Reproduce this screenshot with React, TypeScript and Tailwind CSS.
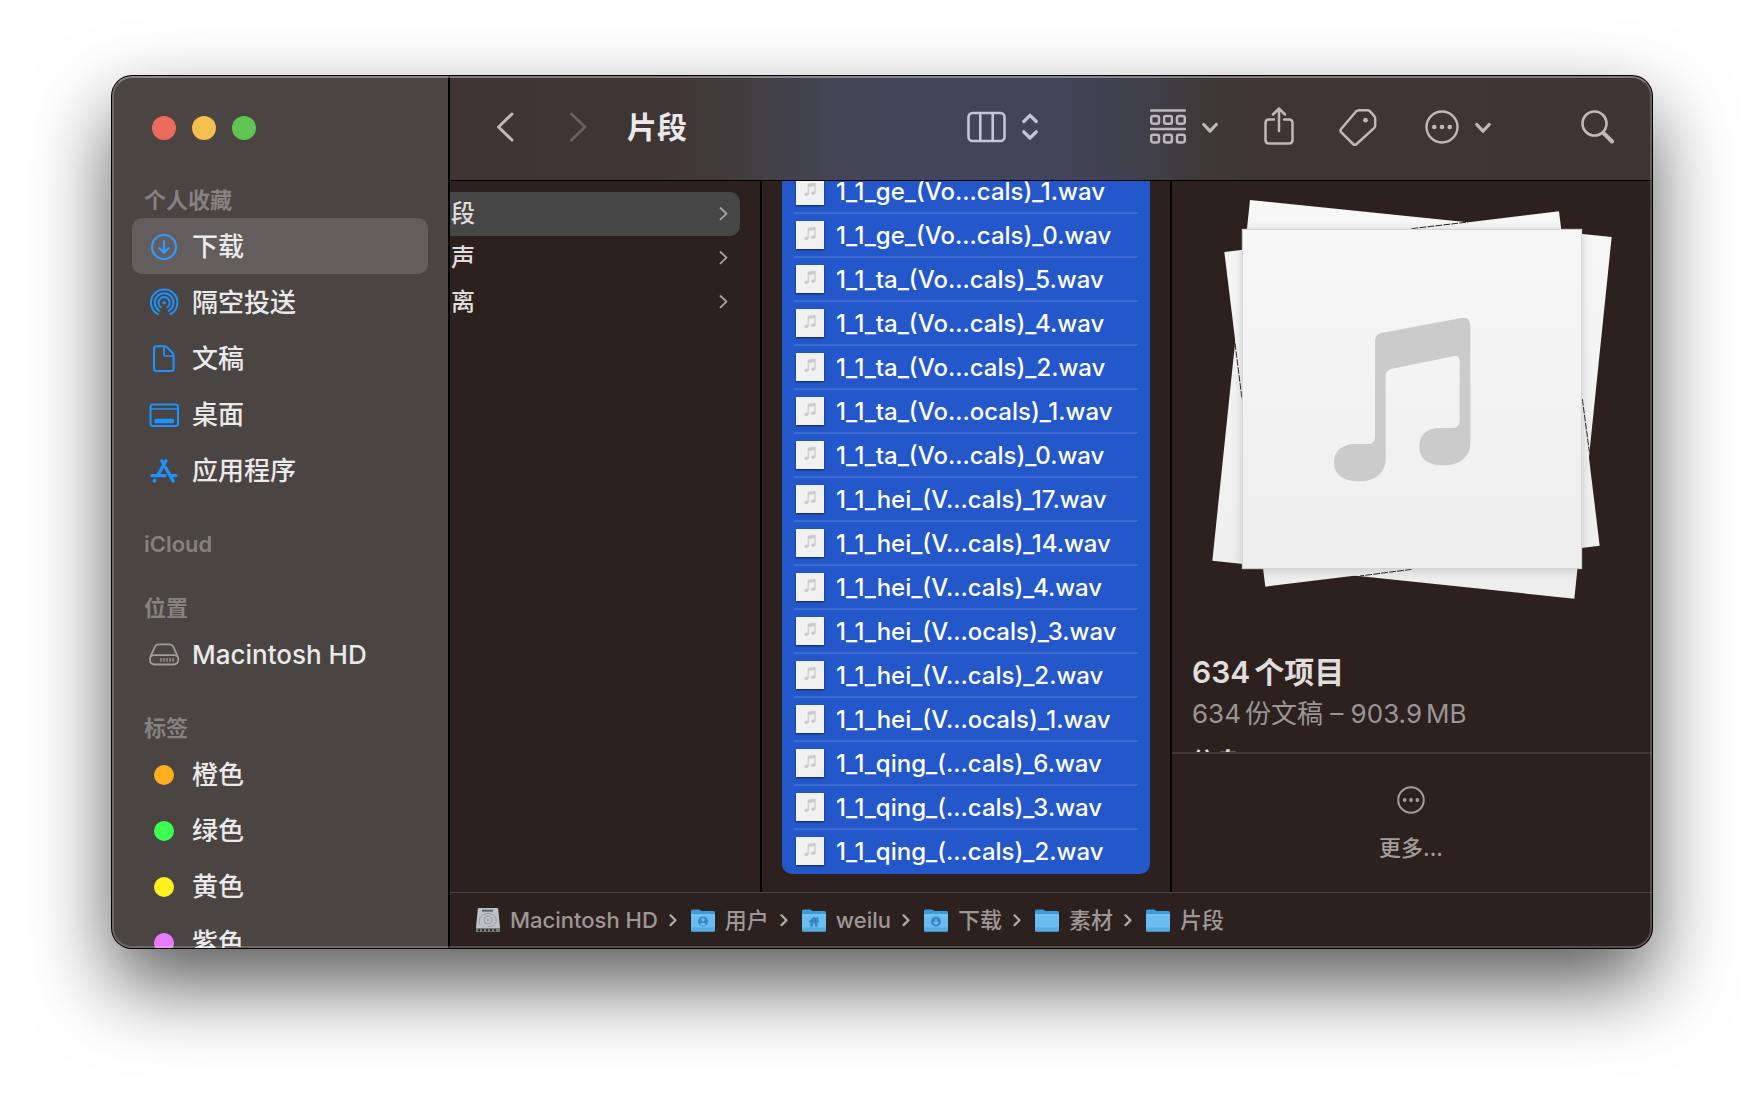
import React from 'react';

type IconProps = { className?: string };

const DownloadIcon: React.FC = () => (
  <svg viewBox="0 0 32 32" className="w-8 h-8" fill="none" stroke="#2f9dff" strokeWidth="2.2" strokeLinecap="round" strokeLinejoin="round">
    <circle cx="16" cy="17" r="12" />
    <path d="M16 11v11.4M11.5 18.2l4.5 4.4 4.5-4.4" />
  </svg>
);

const AirDropIcon: React.FC = () => (
  <svg viewBox="0 0 32 32" className="w-8 h-8" fill="none" stroke="#1e93ff" strokeWidth="2" strokeLinecap="round">
    <path d="M9.9 28.2A13.2 13.2 0 1 1 22.5 28.2" />
    <path d="M11.3 24.7A9.4 9.4 0 1 1 20.9 24.7" />
    <path d="M12.8 21.2A5.6 5.6 0 1 1 19.4 21.2" />
    <circle cx="16.1" cy="16.8" r="1.8" fill="#1e93ff" stroke="none" />
  </svg>
);

const DocumentIcon: React.FC = () => (
  <svg viewBox="0 0 32 32" className="w-8 h-8" fill="none" stroke="#1e93ff" strokeWidth="2.1" strokeLinejoin="round">
    <path d="M8.500 4.200h8.200c1 0 1.600.3 2.300 1l5.600 5.700c.7.7 1 1.300 1 2.300v13.300c0 1.700-.8 2.500-2.500 2.500H8.500c-1.700 0-2.500-.8-2.500-2.500V6.700C6 5 6.800 4.200 8.500 4.200Z" />
    <path d="M16 4.500v8c0 1 .5 1.500 1.500 1.500h8" strokeWidth="1.700" />
  </svg>
);

const DesktopIcon: React.FC = () => (
  <svg viewBox="0 0 32 32" className="w-8 h-8" fill="none" stroke="#1e93ff" strokeWidth="2.1">
    <rect x="2.500" y="6.500" width="27.500" height="21.500" rx="2.500" />
    <path d="M2.500 11h27.500" strokeWidth="1.500" />
    <rect x="6.500" y="20.800" width="19.500" height="4.400" rx="1" fill="#1e93ff" stroke="none" />
  </svg>
);

const AppsIcon: React.FC = () => (
  <svg viewBox="0 0 32 32" className="w-8 h-8" fill="none" stroke="#1e93ff" strokeWidth="3.200" strokeLinecap="round">
    <path d="M18 6.800 9.800 21.200M13.800 6.800l1.500 2.600M17.600 13.600 25.100 27M4 21.700h13.200M23.500 21.700h4.400M6.800 26.200l-.5.9" />
  </svg>
);

const DiskIcon: React.FC = () => (
  <svg viewBox="0 0 32 32" className="w-8 h-8" fill="none" stroke="#a09c9c" strokeWidth="1.800" strokeLinejoin="round">
    <path d="M10.500 6.300h11.200c1.700 0 2.700.7 3.500 2.300l4.300 9.400c.6 1.300.8 2.300.8 3.300 0 3.300-1.600 5.200-5 5.200H6.900c-3.400 0-5-1.900-5-5.200 0-1 .2-2 .8-3.300L7 8.600c.8-1.600 1.800-2.300 3.500-2.300Z" />
    <path d="M2.500 18.800c1-1.500 2.200-1.700 4-1.700h19.200c1.800 0 3 .2 4 1.700" />
    <path d="M13 20v3.700M16 20v3.700M19 20v3.700M22 20v3.700M25 20v3.700" strokeWidth="1.300" />
  </svg>
);

const SmallDown: React.FC = () => (
  <svg viewBox="0 0 16 36" className="w-4 h-9" fill="none" stroke="currentColor" strokeWidth="3.200" strokeLinecap="round" strokeLinejoin="round">
    <path d="m1.800 15.500 6.200 6.700 6.200-6.700" />
  </svg>
);

const EllipsisCircle: React.FC<IconProps> = ({ className }) => (
  <svg viewBox="0 0 34 34" className={className} fill="none" stroke="currentColor" strokeWidth="2.400">
    <circle cx="17" cy="17" r="15.500" />
    <g fill="currentColor" stroke="none">
      <circle cx="9.300" cy="17" r="2.300" />
      <circle cx="17" cy="17" r="2.300" />
      <circle cx="24.700" cy="17" r="2.300" />
    </g>
  </svg>
);

const NOTE =
  'M645 484Q645 463 664 459L903 414Q931 409 931 438V788C931 830 900 856 852 856C805 856 778 837 778 800C778 763 802 744 838 744H876Q899 744 899 722V546Q899 525 880 529L696 566Q677 570 677 588V836C677 878 645 904 598 904C552 904 522 885 522 848C522 811 548 792 584 792H621Q645 792 645 770Z';

const FileIcon: React.FC = () => (
  <svg viewBox="0 0 28 28" className="w-7 h-7 shrink-0 bg-[#f1f1f1] shadow-[0_1px_2px_rgba(0,0,0,0.6)]">
    <g transform="translate(-5.500 -5.300) scale(0.0268)" fill="#cbcbcb" stroke="#cbcbcb" strokeWidth="14">
      <path d={NOTE} />
    </g>
  </svg>
);

const PaperStack: React.FC = () => (
  <svg viewBox="156 57 1200 1200" className="w-[400px] h-[400px]">
    <defs>
      <linearGradient id="paper" x1="0" y1="0" x2="0" y2="1">
        <stop offset="0" stopColor="#f7f7f7" />
        <stop offset="1" stopColor="#eeeeee" />
      </linearGradient>
      <filter id="soft" x="-10%" y="-10%" width="120%" height="120%">
        <feGaussianBlur stdDeviation="16" />
      </filter>
      <clipPath id="sheets">
        <path d="M270 60 1355 171 1243 1256 157 1142ZM193 216 1197 94 1319 1097 316 1220Z" />
      </clipPath>
    </defs>
    <path d="M270 60 1355 171 1243 1256 157 1142Z" fill="url(#paper)" />
    <path d="M193 216 1197 94 1319 1097 316 1220Z" fill="url(#paper)" />
    <path d="M755 146 925 126M225 490 246 657M1267 657 1288 815M755 1168 600 1188" stroke="#2c211f" strokeWidth="3" strokeDasharray="20 4" />
    <g clipPath="url(#sheets)">
      <rect x="246" y="152" width="1020" height="1020" fill="#000" opacity="0.160" filter="url(#soft)" />
    </g>
    <rect x="247" y="148" width="1018" height="1018" fill="url(#paper)" stroke="#d2d2d2" strokeWidth="3" />
    <path d={NOTE} fill="#cbcbcb" />
  </svg>
);

const DriveIcon: React.FC = () => (
  <svg viewBox="0 0 24 26" className="w-6 h-[26px] shrink-0">
    <path d="M3 1h18q1 0 1.200 1L24 20.500v3q0 1.500-1.500 1.500h-21Q0 25 0 23.500v-3L1.800 2Q2 1 3 1Z" fill="#bcc3c7" />
    <path d="M0 21h24v2.500q0 1.500-1.500 1.500h-21Q0 25 0 23.500Z" fill="#747b7e" />
    <path d="M2 23.300h20" stroke="#23282a" strokeWidth="2" strokeDasharray="2 2" />
    <path d="M6 2.700h11v2H6Z" fill="#5d6468" />
    <g fill="none" stroke="#929b9f">
      <path d="M4 18C1.500 11 6 6.500 12 6.500s9 4 8 8.500c-.8 3.500-4 4.500-8 4.500" />
      <circle cx="12" cy="13" r="4" />
    </g>
    <circle cx="12" cy="13" r="1" fill="#929b9f" />
  </svg>
);

const FolderIcon: React.FC<{ badge?: string }> = ({ badge }) => (
  <svg viewBox="0 0 24 26" className="w-6 h-[26px] shrink-0">
    <path d="M0 4q0-1.500 1.500-1.500h6q1 0 1.700.7t1.800.7h11.500Q24 3.900 24 5.500V10H0Z" fill="#3f9bd6" />
    <path d="M0 7.500h24V23q0 1.500-1.500 1.500h-21Q0 24.500 0 23Z" fill="#6bbdf0" />
    <path d="M0 7.500h24v1H0Z" fill="#86d0fa" />
    <path d="M0 20.500h24V23q0 1.500-1.500 1.500h-21Q0 24.500 0 23Z" fill="#56abe1" />
    {badge === 'user' && (
      <g>
        <circle cx="12" cy="14.500" r="5" fill="#3787c4" />
        <circle cx="12" cy="12.800" r="1.700" fill="#6bbdf0" />
        <path d="M8.700 17.500q3.300-3.500 6.600 0-3.300 2.500-6.600 0Z" fill="#6bbdf0" />
      </g>
    )}
    {badge === 'home' && (
      <path d="m6.500 14.500 5.500-5 2.500 2.200V10h1.800v3.500l1.200 1-1 1-.8-.7v4.700h-2.700v-3.300h-2v3.300H8.300v-4.700l-.8.700Z" fill="#3787c4" />
    )}
    {badge === 'download' && (
      <g>
        <circle cx="12" cy="14.500" r="5" fill="#3787c4" />
        <path d="M12 11.800v5M9.800 15l2.200 2.200 2.200-2.200" fill="none" stroke="#7cc9f7" strokeWidth="1.200" />
      </g>
    )}
  </svg>
);

const favorites = [
  { name: '下载', icon: <DownloadIcon />, active: true },
  { name: '隔空投送', icon: <AirDropIcon /> },
  { name: '文稿', icon: <DocumentIcon /> },
  { name: '桌面', icon: <DesktopIcon /> },
  { name: '应用程序', icon: <AppsIcon /> },
];

const tags = [
  { name: '橙色', color: 'bg-[#ffae1f]' },
  { name: '绿色', color: 'bg-[#3bff51]' },
  { name: '黄色', color: 'bg-[#fff01f]' },
  { name: '紫色', color: 'bg-[#e77bff]' },
];

const files = [
  '1_1_ge_(Vo...cals)_1.wav',
  '1_1_ge_(Vo...cals)_0.wav',
  '1_1_ta_(Vo...cals)_5.wav',
  '1_1_ta_(Vo...cals)_4.wav',
  '1_1_ta_(Vo...cals)_2.wav',
  '1_1_ta_(Vo...ocals)_1.wav',
  '1_1_ta_(Vo...cals)_0.wav',
  '1_1_hei_(V...cals)_17.wav',
  '1_1_hei_(V...cals)_14.wav',
  '1_1_hei_(V...cals)_4.wav',
  '1_1_hei_(V...ocals)_3.wav',
  '1_1_hei_(V...cals)_2.wav',
  '1_1_hei_(V...ocals)_1.wav',
  '1_1_qing_(...cals)_6.wav',
  '1_1_qing_(...cals)_3.wav',
  '1_1_qing_(...cals)_2.wav',
];

const crumbs = [
  { name: 'Macintosh HD', icon: <DriveIcon /> },
  { name: '用户', icon: <FolderIcon badge="user" /> },
  { name: 'weilu', icon: <FolderIcon badge="home" /> },
  { name: '下载', icon: <FolderIcon badge="download" /> },
  { name: '素材', icon: <FolderIcon /> },
  { name: '片段', icon: <FolderIcon /> },
];

const SectionTitle: React.FC<{ children: React.ReactNode }> = ({ children }) => (
  <h2 className="h-9 pl-3 flex items-center text-[22px] font-semibold text-[#878181]">{children}</h2>
);

const SidebarItem: React.FC<{ name: string; icon: React.ReactNode; active?: boolean }> = ({ name, icon, active }) => (
  <a
    href="#"
    className={`h-14 pl-4 flex items-center gap-3 rounded-[10px] text-[26px] font-medium text-[#ebe9e9] ${active ? 'bg-[#635d5d]' : ''}`}
  >
    {icon}
    <span className="pt-px">{name}</span>
  </a>
);

const Sidebar: React.FC = () => (
  <aside className="w-[338px] shrink-0 px-5 bg-[#4a4443] border-r-2 border-black overflow-hidden">
    <div className="h-[106px] pl-5 pb-[2px] flex items-center gap-4">
      <button aria-label="关闭" className="w-6 h-6 rounded-full bg-[#ed6a5e]" />
      <button aria-label="最小化" className="w-6 h-6 rounded-full bg-[#f5bf4f]" />
      <button aria-label="缩放" className="w-6 h-6 rounded-full bg-[#61c554]" />
    </div>
    <nav className="flex flex-col gap-7">
      <section>
        <SectionTitle>个人收藏</SectionTitle>
        {favorites.map(item => (
          <SidebarItem key={item.name} {...item} />
        ))}
      </section>
      <section>
        <SectionTitle>iCloud</SectionTitle>
      </section>
      <section>
        <SectionTitle>位置</SectionTitle>
        <SidebarItem name="Macintosh HD" icon={<DiskIcon />} />
      </section>
      <section>
        <SectionTitle>标签</SectionTitle>
        {tags.map(tag => (
          <SidebarItem
            key={tag.name}
            name={tag.name}
            icon={
              <span className="w-8 h-8 pt-[2px] flex items-center justify-center">
                <span className={`w-5 h-5 rounded-full ${tag.color}`} />
              </span>
            }
          />
        ))}
      </section>
    </nav>
  </aside>
);

const Toolbar: React.FC = () => (
  <header className="h-[105px] shrink-0 pl-[39px] pr-[37px] pb-[2px] flex items-center border-b border-black text-[#c2b9b7] bg-[linear-gradient(90deg,#3e3433_0%,#3f3534_17%,#403d3e_24%,#444452_31%,#42445a_40%,#42445a_50%,#403f49_58%,#3d3938_63%,#3f3534_68%,#3e3433_100%)]">
    <button aria-label="后退" className="w-8">
      <svg viewBox="0 0 32 36" className="w-8 h-9" fill="none" stroke="currentColor" strokeWidth="3" strokeLinecap="round" strokeLinejoin="round">
        <path d="M23 5 9.500 18 23 31" />
      </svg>
    </button>
    <button aria-label="前进" className="w-8 ml-[41px] text-[#6a605f]">
      <svg viewBox="0 0 32 36" className="w-8 h-9" fill="none" stroke="currentColor" strokeWidth="3" strokeLinecap="round" strokeLinejoin="round">
        <path d="M9.500 5 23 18 9.500 31" />
      </svg>
    </button>
    <h1 className="ml-[33px] flex-1 text-[30px] font-bold text-[#ebe9e9] whitespace-nowrap">片段</h1>
    <button aria-label="显示方式" className="flex items-center gap-4 text-[#c5c5d6]">
      <svg viewBox="0 0 39 36" className="w-[39px] h-9" fill="none" stroke="currentColor" strokeWidth="2.600">
        <rect x="1.500" y="4" width="36" height="28" rx="4" />
        <path d="M13.300 4v28M25.700 4v28" />
      </svg>
      <svg viewBox="0 0 16 36" className="w-4 h-9" fill="none" stroke="currentColor" strokeWidth="3.200" strokeLinecap="round" strokeLinejoin="round">
        <path d="M1.800 12.500 8 6.300l6.200 6.200M1.800 22.800 8 29l6.200-6.200" />
      </svg>
    </button>
    <button aria-label="分组" className="ml-28 flex items-center gap-4 text-[#bdb8ba]">
      <svg viewBox="0 0 36 36" className="w-9 h-9" fill="none" stroke="currentColor" strokeWidth="2.500">
        <path d="M1 1.500h34M1 20h34" strokeLinecap="round" />
        <rect x="1.200" y="7" width="7.800" height="7.800" rx="2" />
        <rect x="14.100" y="7" width="7.800" height="7.800" rx="2" />
        <rect x="27" y="7" width="7.800" height="7.800" rx="2" />
        <rect x="1.200" y="25.700" width="7.800" height="7.800" rx="2" />
        <rect x="14.100" y="25.700" width="7.800" height="7.800" rx="2" />
        <rect x="27" y="25.700" width="7.800" height="7.800" rx="2" />
      </svg>
      <SmallDown />
    </button>
    <button aria-label="共享" className="ml-[46px]">
      <svg viewBox="0 0 30 40" className="w-[30px] h-10" fill="none" stroke="currentColor" strokeWidth="2.500" strokeLinecap="round" strokeLinejoin="round">
        <path d="M10 12.500H5q-3.500 0-3.500 3.500v17Q1.500 36.500 5 36.500h20q3.500 0 3.500-3.500V16q0-3.500-3.500-3.500h-5" />
        <path d="M15 24V1.500M9 7.500l6-6 6 6" />
      </svg>
    </button>
    <button aria-label="标签" className="ml-[45px]">
      <svg viewBox="0 0 38 38" className="w-[38px] h-[38px]" fill="none" stroke="currentColor" strokeWidth="2.500" strokeLinejoin="round">
        <path d="M20.200 2.300h8.300q1.500 0 2.600 1.100l4 4.500q1.100 1.200 1.100 2.800v6.500q0 1.700-1.200 2.900L17.600 36q-1.800 1.600-3.500 0L2.300 24.300q-1.600-1.700 0-3.500L17 3.500q1.200-1.200 3.200-1.200Z" />
        <circle cx="26.500" cy="12.200" r="2.400" fill="currentColor" stroke="none" />
      </svg>
    </button>
    <button aria-label="更多操作" className="ml-12 flex items-center gap-4">
      <EllipsisCircle className="w-[34px] h-[34px]" />
      <SmallDown />
    </button>
    <button aria-label="搜索" className="ml-[90px]">
      <svg viewBox="0 0 34 36" className="w-[34px] h-9" fill="none" stroke="currentColor" strokeLinecap="round">
        <circle cx="13.500" cy="14.500" r="12" strokeWidth="2.600" />
        <path d="m23 24.500 8 8" strokeWidth="4" />
      </svg>
    </button>
  </header>
);

const Preview: React.FC = () => (
  <section className="flex-1 min-w-0 flex flex-col">
    <div className="flex-1 min-h-0 overflow-hidden pt-[18px] px-5">
      <div className="flex justify-center">
        <PaperStack />
      </div>
      <h2 className="mt-[53px] text-[30px] leading-10 font-semibold text-[#e0dedd] whitespace-nowrap">
        <span className="mr-1">634</span>个项目
      </h2>
      <p className="mt-1 text-[26px] leading-9 text-[#9b9594] whitespace-nowrap">
        <span className="mr-1">634</span>份文稿 – 903.9<span className="ml-1">MB</span>
      </p>
      <h3 className="mt-3 text-[24px] leading-9 font-bold text-[#e0dedd]">信息</h3>
    </div>
    <div className="h-[140px] shrink-0 pr-[2px] border-t-2 border-[#433938] flex justify-center">
      <button className="flex flex-col items-center pt-8 text-[22px] leading-8 font-medium text-[#a39d9c]">
        <EllipsisCircle className="w-7 h-7" />
        <span className="mt-[18px]">更多...</span>
      </button>
    </div>
  </section>
);

const App: React.FC = () => {
  return (
    <div className="h-screen bg-white px-28 pt-[76px] pb-[148px] overflow-hidden font-['Inter','Noto_Sans_CJK_SC',sans-serif]">
      <main className="relative h-full flex rounded-[20px] overflow-hidden bg-[#2c211f] shadow-[0_0_0_1px_#000,0_36px_80px_rgba(0,0,0,0.65)]">
        <Sidebar />
        <div className="flex-1 min-w-0 flex flex-col">
          <Toolbar />
          <div className="flex-1 min-h-0 flex">
            <ul className="w-[312px] shrink-0 pt-[11px] pr-5 border-r-2 border-black">
              {['段', '声', '离'].map((name, i) => (
                <li
                  key={name}
                  className={`h-11 pl-px pr-3 pb-px flex items-center justify-between rounded-r-[10px] text-[24px] font-medium text-[#dfdddc] ${i === 0 ? 'bg-[#464646]' : ''}`}
                >
                  {name}
                  <svg viewBox="0 0 10 16" className="w-[10px] h-4" fill="none" stroke="#a8a3a2" strokeWidth="1.800" strokeLinecap="round" strokeLinejoin="round">
                    <path d="m2.500 2 6 5.700-6 5.700" />
                  </svg>
                </li>
              ))}
            </ul>
            <div className="w-[410px] shrink-0 px-5 pb-[18px] flex flex-col justify-end overflow-hidden border-r-2 border-black">
              <ul className="shrink-0 px-3 bg-[#2458ca] rounded-[10px]">
                {files.map(name => (
                  <li
                    key={name}
                    className="h-11 pl-[2px] flex items-center gap-3 border-b-2 border-[#3b69cf] last:border-transparent text-[24px] font-medium text-white whitespace-nowrap"
                  >
                    <FileIcon />
                    <span className="pt-[2px]">{name}</span>
                  </li>
                ))}
              </ul>
            </div>
            <Preview />
          </div>
          <nav className="h-14 shrink-0 pl-[26px] pb-px flex items-center border-t border-[#4d4342] text-[22px] font-medium text-[#9d9796]">
            {crumbs.map((crumb, i) => (
              <React.Fragment key={crumb.name}>
                {i > 0 && (
                  <svg viewBox="0 0 8 14" className="w-2 h-[14px] ml-[11px] mr-[14px] shrink-0" fill="none" stroke="#b3adac" strokeWidth="2.200" strokeLinecap="round" strokeLinejoin="round">
                    <path d="m1.500 2.300 5 4.900-5 4.900" />
                  </svg>
                )}
                <a href="#" className="flex items-center gap-[10px] whitespace-nowrap">
                  {crumb.icon}
                  {crumb.name}
                </a>
              </React.Fragment>
            ))}
          </nav>
        </div>
        <div className="absolute inset-0 rounded-[20px] border-2 border-white/20 border-t-white/35 pointer-events-none" />
      </main>
    </div>
  );
};

export default App;
